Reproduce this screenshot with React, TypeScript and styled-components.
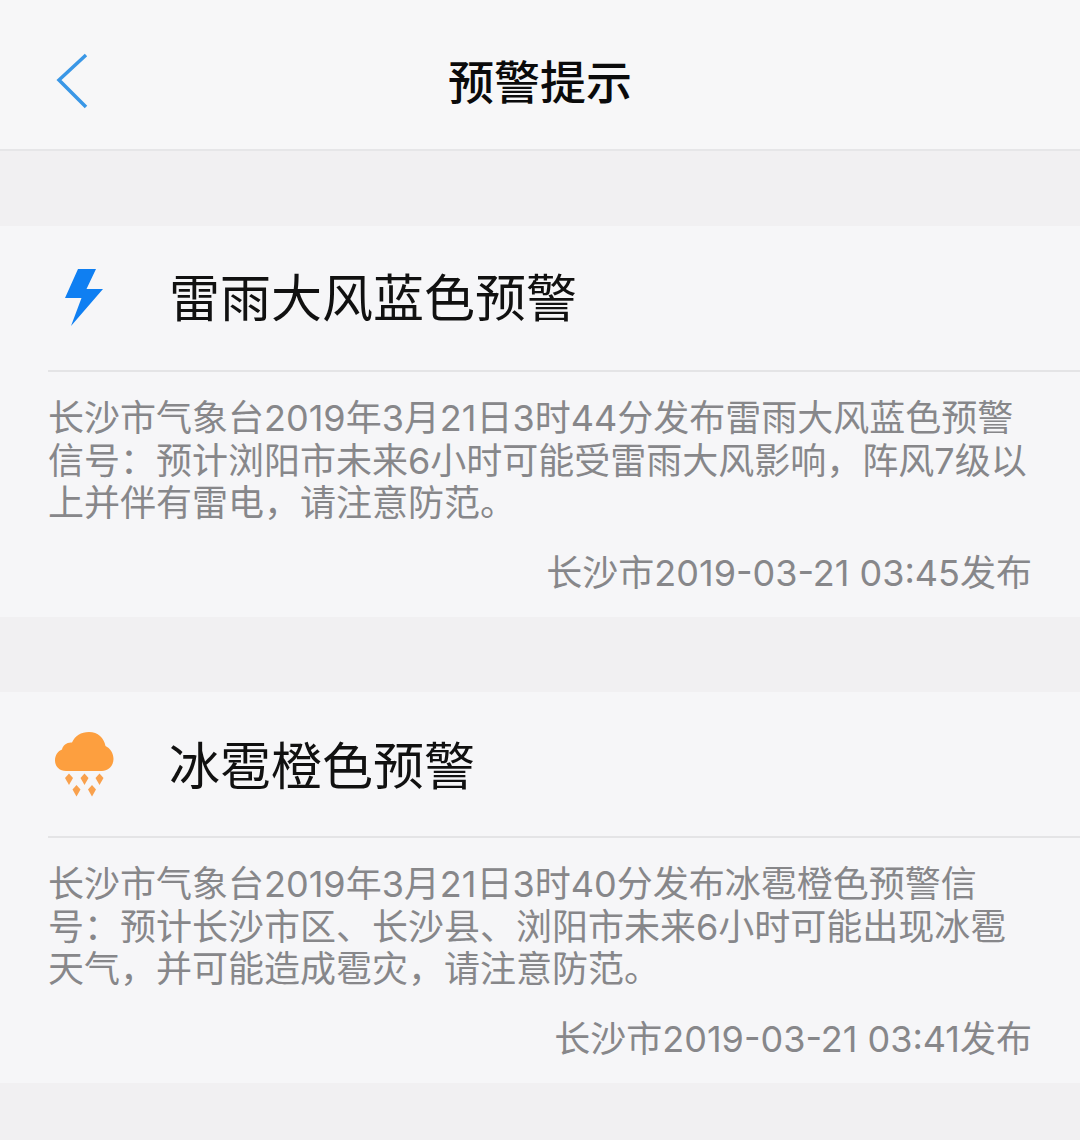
import styled, { createGlobalStyle } from "styled-components";

const GlobalStyle = createGlobalStyle`
  html, body {
    margin: 0;
    padding: 0;
    background: #f1f0f2;
    font-family: "Noto Sans CJK SC", "Noto Sans", sans-serif;
  }
`;

const Page = styled.div`
  width: 1080px;
  height: 1140px;
  overflow: hidden;
  background: #f1f0f2;
`;

const Header = styled.header`
  height: 149px;
  display: flex;
  align-items: center;
  justify-content: center;
  position: relative;
  background: #f7f7f8;
  border-bottom: 2px solid #e6e6e8;
`;

const BackIcon = styled.svg`
  position: absolute;
  left: 54px;
  top: 52px;
`;

const HeaderTitle = styled.h1`
  margin: 8px 0 0;
  font-size: 46px;
  line-height: 60px;
  font-weight: 500;
  color: #0b0b0b;
`;

const List = styled.div`
  display: flex;
  flex-direction: column;
  gap: 75px;
  padding-top: 75px;
`;

const Card = styled.section`
  background: #f6f6f8;
  height: 391px;
  box-sizing: border-box;
`;

const TitleRow = styled.div`
  height: 144px;
  display: flex;
  align-items: center;
  margin-left: 48px;
  border-bottom: 2px solid #e4e4e6;
`;

const IconSlot = styled.div<{ $inset: number }>`
  width: 121px;
  flex: none;
  display: flex;
  align-items: center;
  padding-left: ${(p) => p.$inset}px;
  box-sizing: border-box;
`;

const CardTitle = styled.h2<{ $lift: number }>`
  margin: 0 0 ${(p) => p.$lift}px;
  font-size: 51px;
  line-height: 66px;
  font-weight: 400;
  color: #111;
`;

const Body = styled.div`
  padding: 25px 48px 0 48px;
  font-family: "Inter", "Noto Sans CJK SC", sans-serif;
  font-size: 36px;
  line-height: 42.5px;
  color: #87878a;
  white-space: pre-line;
`;

const Stamp = styled.div`
  margin-top: 24px;
  padding-right: 48px;
  font-family: "Inter", "Noto Sans CJK SC", sans-serif;
  text-align: right;
  font-size: 36px;
  line-height: 48px;
  color: #87878a;
  white-space: nowrap;
`;

function BoltIcon() {
  return (
    <svg width="40" height="58" viewBox="0 0 40 58">
      <path d="M14 0 H32 L22.500 20 H39 L7 57 L17.500 29 H1 Z" fill="#0f7ff2" />
    </svg>
  );
}

function HailIcon() {
  return (
    <svg width="60" height="66" viewBox="0 0 60 66">
      <path
        d="M12 40 C5 40 1 35 1 29.500 C1 24 4 20 8 18.500 C9 14 13 11 18 11.500 C21 5 27 1 35 1 C44 1 50 7 51.500 15 C56 17 59.500 22 59.500 28 C59.500 35 54 40 48 40 Z"
        fill="#fd9f3f"
      />
      <g fill="#f9a14d">
        <path d="M15 42.500 L19 47 L15 54 L11 47 Z" />
        <path d="M30.500 42.500 L34.500 47 L30.500 54 L26.500 47 Z" />
        <path d="M45.500 42.500 L49.500 47 L45.500 54 L41.500 47 Z" />
        <path d="M22.500 54 L26.500 58.500 L22.500 65.500 L18.500 58.500 Z" />
        <path d="M38 54 L42 58.500 L38 65.500 L34 58.500 Z" />
      </g>
    </svg>
  );
}

const warnings = [
  {
    icon: <BoltIcon />,
    inset: 16,
    lift: 6,
    title: "雷雨大风蓝色预警",
    body: "长沙市气象台2019年3月21日3时44分发布雷雨大风蓝色预警\n信号：预计浏阳市未来6小时可能受雷雨大风影响，阵风7级以\n上并伴有雷电，请注意防范。",
    stamp: "长沙市2019-03-21 03:45发布",
  },
  {
    icon: <HailIcon />,
    inset: 6,
    lift: 2,
    title: "冰雹橙色预警",
    body: "长沙市气象台2019年3月21日3时40分发布冰雹橙色预警信\n号：预计长沙市区、长沙县、浏阳市未来6小时可能出现冰雹\n天气，并可能造成雹灾，请注意防范。",
    stamp: "长沙市2019-03-21 03:41发布",
  },
];

export default function App() {
  return (
    <Page>
      <GlobalStyle />
      <Header>
        <BackIcon width="36" height="60" viewBox="0 0 36 60">
          <path d="M32 3 L5 28 L32 55" fill="none" stroke="#3a97e6" strokeWidth="3.500" />
        </BackIcon>
        <HeaderTitle>预警提示</HeaderTitle>
      </Header>
      <List>
        {warnings.map((item) => (
          <Card key={item.title}>
            <TitleRow>
              <IconSlot $inset={item.inset}>{item.icon}</IconSlot>
              <CardTitle $lift={item.lift}>{item.title}</CardTitle>
            </TitleRow>
            <Body>{item.body}</Body>
            <Stamp>{item.stamp}</Stamp>
          </Card>
        ))}
      </List>
    </Page>
  );
}
